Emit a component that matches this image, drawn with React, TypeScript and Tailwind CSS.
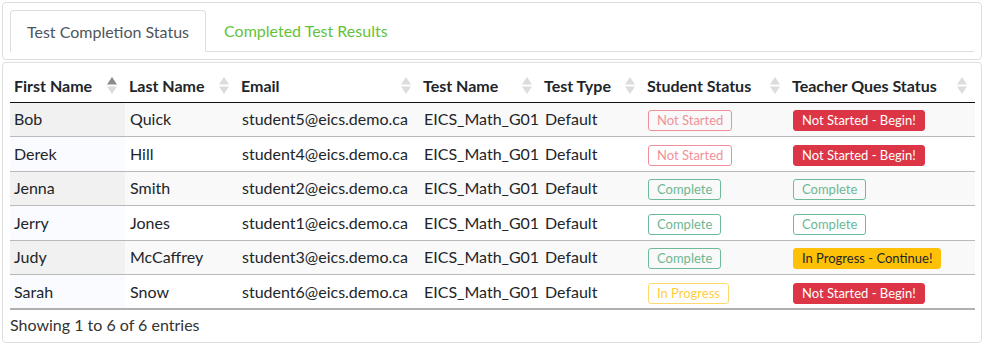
// Test status panel: tab strip card + DataTables-style student table.

type Badge = { label: string; kind: "notStarted" | "complete" | "inProgress" | "begin" | "continue" };

interface Row {
  first: string;
  last: string;
  email: string;
  test: string;
  type: string;
  student: Badge;
  teacher: Badge;
}

const FONT = "'Lato', 'Open Sans', 'Liberation Sans', sans-serif";

const rows: Row[] = [
  { first: "Bob", last: "Quick", email: "student5@eics.demo.ca", test: "EICS_Math_G01", type: "Default", student: { label: "Not Started", kind: "notStarted" }, teacher: { label: "Not Started - Begin!", kind: "begin" } },
  { first: "Derek", last: "Hill", email: "student4@eics.demo.ca", test: "EICS_Math_G01", type: "Default", student: { label: "Not Started", kind: "notStarted" }, teacher: { label: "Not Started - Begin!", kind: "begin" } },
  { first: "Jenna", last: "Smith", email: "student2@eics.demo.ca", test: "EICS_Math_G01", type: "Default", student: { label: "Complete", kind: "complete" }, teacher: { label: "Complete", kind: "complete" } },
  { first: "Jerry", last: "Jones", email: "student1@eics.demo.ca", test: "EICS_Math_G01", type: "Default", student: { label: "Complete", kind: "complete" }, teacher: { label: "Complete", kind: "complete" } },
  { first: "Judy", last: "McCaffrey", email: "student3@eics.demo.ca", test: "EICS_Math_G01", type: "Default", student: { label: "Complete", kind: "complete" }, teacher: { label: "In Progress - Continue!", kind: "continue" } },
  { first: "Sarah", last: "Snow", email: "student6@eics.demo.ca", test: "EICS_Math_G01", type: "Default", student: { label: "In Progress", kind: "inProgress" }, teacher: { label: "Not Started - Begin!", kind: "begin" } },
];

const columns = [
  { label: "First Name", w: "w-[115px]", active: true },
  { label: "Last Name", w: "w-[112px]" },
  { label: "Email", w: "w-[182px]" },
  { label: "Test Name", w: "w-[121px]" },
  { label: "Test Type", w: "w-[103px]" },
  { label: "Student Status", w: "w-[145px]" },
  { label: "Teacher Ques Status", w: "w-[187px]" },
];

const badgeClass: Record<Badge["kind"], string> = {
  notStarted: "border border-[#ef8f99] text-[#f0919b]",
  complete: "border border-[#6fba98] text-[#6cb894]",
  inProgress: "border border-[#ffda6a] text-[#ffcf40]",
  begin: "border border-[#dc3545] bg-[#dc3545] text-white",
  continue: "border border-[#ffc107] bg-[#ffc107] text-[#212529]",
};

function StatusBadge({ b }: { b: Badge }) {
  return (
    <span className={`inline-block rounded-[3px] px-[8px] text-[13px] leading-[19px] ${badgeClass[b.kind]}`}>
      {b.label}
    </span>
  );
}

function SortIcon({ active }: { active?: boolean }) {
  return (
    <svg width="10" height="17" viewBox="0 0 10 17" aria-hidden>
      <path d="M5 0 L10 7.5 L0 7.5 Z" fill={active ? "#8a8a8a" : "#dcdcdc"} />
      <path d="M5 17 L10 9.5 L0 9.5 Z" fill="#dcdcdc" />
    </svg>
  );
}

export default function App() {
  return (
    <div className="w-[984px] h-[345px] bg-white p-[2px] text-[#212529]" style={{ fontFamily: FONT }}>
      {/* Tabs */}
      <div className="h-[58px] rounded-[4px] border border-[#dedede] px-[7px] pt-[7px]">
        <div className="flex items-end h-[42px] border-b border-[#dedede]">
          <div className="h-[42px] -mb-px flex items-center pt-[2px] rounded-t-[4px] border border-[#dedede] border-b-white bg-white px-[16px] text-[16px] text-[#4e555b]">
            Test Completion Status
          </div>
          <div className="h-[42px] flex items-center pt-[2px] px-[18px] text-[16px] text-[#62c33a]">
            Completed Test Results
          </div>
        </div>
      </div>

      {/* Table card */}
      <div className="mt-[2px] h-[281px] rounded-[4px] border border-[#dedede] px-[7px] pt-[7px]">
        <table className="w-[965px] table-fixed border-collapse text-[16px]">
          <thead>
            <tr className="h-[32px] border-b border-[#111]">
              {columns.map((c) => (
                <th key={c.label} className={`${c.w} pl-[4px] pr-[8px] text-left font-bold`}>
                  <div className="flex items-center justify-between">
                    <span>{c.label}</span>
                    <SortIcon active={c.active} />
                  </div>
                </th>
              ))}
            </tr>
          </thead>
          <tbody>
            {rows.map((r, i) => {
              const odd = i % 2 === 0;
              const last = i === rows.length - 1;
              return (
                <tr
                  key={r.email}
                  className={`h-[34.5px] ${odd ? "bg-[#f9f9f9]" : "bg-white"} ${last ? "border-b-2 border-[#b0b0b0]" : "border-b border-[#b9b9b9]"}`}
                >
                  <td className={`pl-[4px] ${odd ? "bg-[#f1f1f1]" : "bg-[#fafbff]"}`}>{r.first}</td>
                  <td className="pl-[5px]">{r.last}</td>
                  <td className="pl-[5px]">{r.email}</td>
                  <td className="pl-[5px]">{r.test}</td>
                  <td className="pl-[5px]">{r.type}</td>
                  <td className="pl-[5px]"><StatusBadge b={r.student} /></td>
                  <td className="pl-[5px]"><StatusBadge b={r.teacher} /></td>
                </tr>
              );
            })}
          </tbody>
        </table>
        <div className="pt-[3px] text-[16px] text-[#333]">Showing 1 to 6 of 6 entries</div>
      </div>
    </div>
  );
}
